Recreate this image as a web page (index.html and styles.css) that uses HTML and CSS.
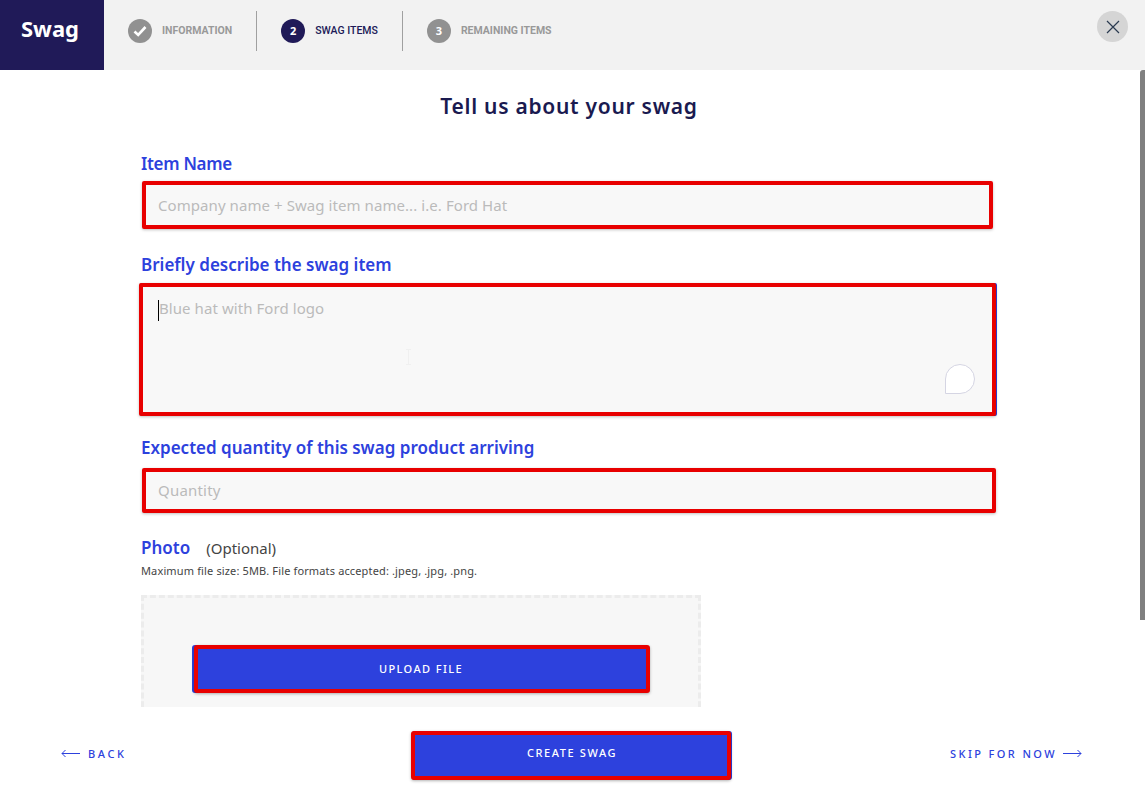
FILE: index.html
```html
<!DOCTYPE html>
<html lang="en">
<head>
<meta charset="utf-8">
<title>Swag</title>
<link rel="stylesheet" href="styles.css">
</head>
<body>
<div class="page">
  <header class="topbar">
    <div class="brand">Swag</div>
    <ol class="steps">
      <li class="step">
        <span class="badge">
          <svg width="16" height="14" viewBox="0 0 16 14"><path d="M2.500 7.500 6.200 11 13.500 3" fill="none" stroke="#fff" stroke-width="2.600"/></svg>
        </span>
        <span class="step-label">INFORMATION</span>
      </li>
      <li class="step step-active">
        <span class="badge badge-num">2</span>
        <span class="step-label">SWAG ITEMS</span>
      </li>
      <li class="step">
        <span class="badge badge-num">3</span>
        <span class="step-label">REMAINING ITEMS</span>
      </li>
    </ol>
    <button class="close" aria-label="Close">
      <svg width="14" height="14" viewBox="0 0 14 14"><path d="M1 1 13 13M13 1 1 13" stroke="#2a3a50" stroke-width="1.200" fill="none"/></svg>
    </button>
  </header>

  <main class="content">
    <h1 class="title">Tell us about your swag</h1>
    <form class="form">
      <label class="label label-first">Item Name</label>
      <input class="field field-name" placeholder="Company name + Swag item name... i.e. Ford Hat">

      <label class="label label-second">Briefly describe the swag item</label>
      <div class="area-wrap">
        <textarea class="field field-area" placeholder="Blue hat with Ford logo"></textarea>
        <span class="caret"></span>
        <svg class="ibeam" width="5" height="16" viewBox="0 0 5 16"><path d="M0 .5H5M0 15.500H5M2.500 0V16" stroke="#f0f0f0" fill="none"/></svg>
        <svg class="bubble" width="32" height="32" viewBox="0 0 32 32"><path d="M1.500 30.500V16A14.500 14.500 0 1 1 16 30.500Z" fill="#fff" stroke="#d5d5e3" stroke-width="1"/></svg>
      </div>

      <label class="label label-third">Expected quantity of this swag product arriving</label>
      <input class="field field-qty" placeholder="Quantity">

      <div class="photo-row">
        <span class="label">Photo</span>
        <span class="optional">(Optional)</span>
      </div>
      <p class="hint">Maximum file size: 5MB. File formats accepted: .jpeg, .jpg, .png.</p>

      <div class="dropzone">
        <button type="button" class="btn btn-upload">UPLOAD FILE</button>
      </div>
    </form>
    <div class="scrollbar"></div>
  </main>

  <footer class="footer">
    <a class="nav-link nav-back">
      <svg width="19" height="9" viewBox="0 0 19 9"><path d="M19 4.500H1M4.500 1 1 4.500 4.500 8" stroke="#2d41dd" fill="none"/></svg>
      BACK
    </a>
    <button type="button" class="btn btn-create">CREATE SWAG</button>
    <a class="nav-link nav-skip">
      SKIP FOR NOW
      <svg width="19" height="9" viewBox="0 0 19 9"><path d="M0 4.500H18M14.500 1 18 4.500 14.500 8" stroke="#2d41dd" fill="none"/></svg>
    </a>
  </footer>
</div>
</body>
</html>
```

FILE: styles.css
```css
* { box-sizing: border-box; }
html, body { margin: 0; height: 100%; overflow: hidden; }
body { font-family: "Noto Sans", sans-serif; background: #fff; color: #333; }

.page { display: flex; flex-direction: column; height: 796px; }

.topbar { display: flex; align-items: stretch; height: 70px; background: #f2f2f2; flex: none; position: relative; }
.brand { width: 104px; background: #201a58; color: #fff; font-size: 22px; font-weight: 700; display: flex; align-items: center; justify-content: center; padding: 0 4px 14px 0; }
.steps { display: flex; list-style: none; margin: 11px 0 0; padding: 0 0 0 24px; height: 40px; }
.step { display: flex; align-items: center; gap: 10px; padding-right: 24px; margin-right: 24px; border-right: 1px solid #a0a0a0; }
.step:last-child { border-right: 0; }
.badge { width: 24px; height: 24px; border-radius: 50%; background: #919191; color: #fff; font-size: 11px; font-weight: 700; display: flex; align-items: center; justify-content: center; }
.badge-num { padding-bottom: 2px; }
.step-label { font-family: "Roboto", sans-serif; font-size: 10.500px; font-weight: 700; line-height: 14px; color: #999; }
.step-active .badge { background: #201a58; }
.step-active .step-label { color: #201a58; font-weight: 500; }
.close { position: absolute; right: 17px; top: 11px; width: 31px; height: 31px; border: 0; padding: 0; border-radius: 50%; background: #d5d5d5; display: flex; align-items: center; justify-content: center; }

.content { flex: 1; min-height: 0; overflow: hidden; position: relative; }
.title { margin: 21px 0 0; padding-right: 7px; height: 30px; line-height: 30px; text-align: center; font-size: 21px; font-weight: 600; letter-spacing: .72px; color: #1a1a50; }
.form { width: 860px; margin-left: 141px; }

.label { display: block; font-size: 17px; font-weight: 600; line-height: 24px; color: #2d41dd; }
.label-first { margin-top: 31px; letter-spacing: -.3px; }
.label-second { margin-top: 24px; }
.label-third { margin-top: 20px; }

.field { display: block; font-family: inherit; font-size: 15px; letter-spacing: .07px; background: #f8f8f8; border: 4px solid #e80000; border-radius: 2px; padding: 0 12px; color: #333; outline: 0; box-shadow: 0 1px 3px rgba(0,0,0,.25); }
.field::placeholder { color: #bbb; opacity: 1; }
.field-name { width: 851px; height: 48px; margin: 5px 0 0 1px; }
.area-wrap { position: relative; width: 857px; height: 133px; margin: 6px 0 0 -2px; }
.field-area { width: 100%; height: 100%; resize: none; padding: 10px 16px; line-height: 22px; box-shadow: 0 1px 3px rgba(0,0,0,.25), 1px 0 0 #2d41dd; }
.caret { position: absolute; left: 19px; top: 17px; width: 1px; height: 21px; background: #000; }
.ibeam { position: absolute; left: 267px; top: 66px; }
.bubble { position: absolute; left: 805px; top: 80px; }
.field-qty { width: 854px; height: 45px; margin: 8px 0 0 1px; padding-bottom: 2px; letter-spacing: .2px; }

.photo-row { display: flex; align-items: center; gap: 16px; margin-top: 23px; height: 24px; }
.optional { font-size: 15px; color: #444; }
.hint { margin: 3px 0 0; font-size: 11px; letter-spacing: .14px; line-height: 16px; color: #444; }

.dropzone { width: 560px; height: 130px; margin-top: 16px; padding: 47px 0 0 50px; background: #f7f7f7; border: 3px dashed #ececec; }

.btn { display: block; font-family: inherit; font-size: 11px; font-weight: 500; line-height: 14px; color: #fff; background: #2d41dd; border: 4px solid #e80000; border-radius: 3px; }
.btn-upload { width: 456px; height: 48px; padding-right: 8px; letter-spacing: 1.400px; box-shadow: 0 1px 3px rgba(0,0,0,.3), -2px 0 0 #2d41dd; }
.btn-create { width: 320px; height: 49px; margin-right: 2px; padding: 0 0 5px 3px; letter-spacing: 1.600px; box-shadow: 0 1px 3px rgba(0,0,0,.3), 1px 0 0 #2d41dd; }

.scrollbar { position: absolute; right: 0; top: 0; width: 5px; height: 550px; background: #808080; border-radius: 3px 0 0 0; }

.footer { flex: none; height: 89px; display: grid; grid-template-columns: 1fr auto 1fr; align-items: start; padding: 24px 63px 0 61px; background: #fff; }
.nav-link { display: flex; align-items: center; height: 44px; font-size: 11px; font-weight: 500; color: #2d41dd; }
.nav-back { justify-self: start; gap: 8px; letter-spacing: 2.600px; }
.nav-skip { justify-self: end; gap: 6px; letter-spacing: 2.400px; }
```
